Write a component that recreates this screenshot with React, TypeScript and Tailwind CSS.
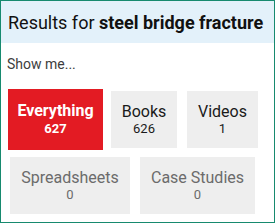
import React from "react";

const tabs = [
  { label: "Books", count: 626, w: "w-[66px]", active: true },
  { label: "Videos", count: 1, w: "w-[71px]", active: true },
  { label: "Spreadsheets", count: 0, w: "w-[120px]", active: false },
  { label: "Case Studies", count: 0, w: "w-[115px]", active: false },
];

export default function App() {
  return (
    <div
      className="w-[275px] h-[223px] border border-[#178a6f] bg-white overflow-hidden"
      style={{ fontFamily: "Roboto, 'Liberation Sans', sans-serif" }}
    >
      {/* search header */}
      <div className="h-[42px] bg-[#e3f1fa] pl-[7px] flex items-center text-[18px] text-[#111] whitespace-nowrap">
        Results for&nbsp;<span className="font-bold">steel bridge fracture</span>
      </div>

      <div className="mt-[11px] pl-[6px] text-[14px] leading-[20px] text-[#3d3d3d]">
        Show me...
      </div>

      {/* content type filters */}
      <div className="mt-[17px] pl-[9px] flex flex-wrap gap-x-[10px] gap-y-[9px]">
        <div className="w-[95px] h-[61px] -m-[2px] bg-[#e31b23] text-white flex flex-col items-center justify-center leading-tight">
          <span className="text-[16px] font-bold">Everything</span>
          <span className="text-[13px] font-bold">627</span>
        </div>
        {tabs.map((t) => (
          <div
            key={t.label}
            className={`${t.w} h-[57px] bg-[#eeeeee] flex flex-col items-center justify-center ${
              t.active ? "text-[#1a1a1a]" : "text-[#6b6b6b]"
            }`}
          >
            <span className="text-[16px] leading-[19px]">{t.label}</span>
            <span className="text-[13px] leading-[16px]">{t.count}</span>
          </div>
        ))}
      </div>
    </div>
  );
}
